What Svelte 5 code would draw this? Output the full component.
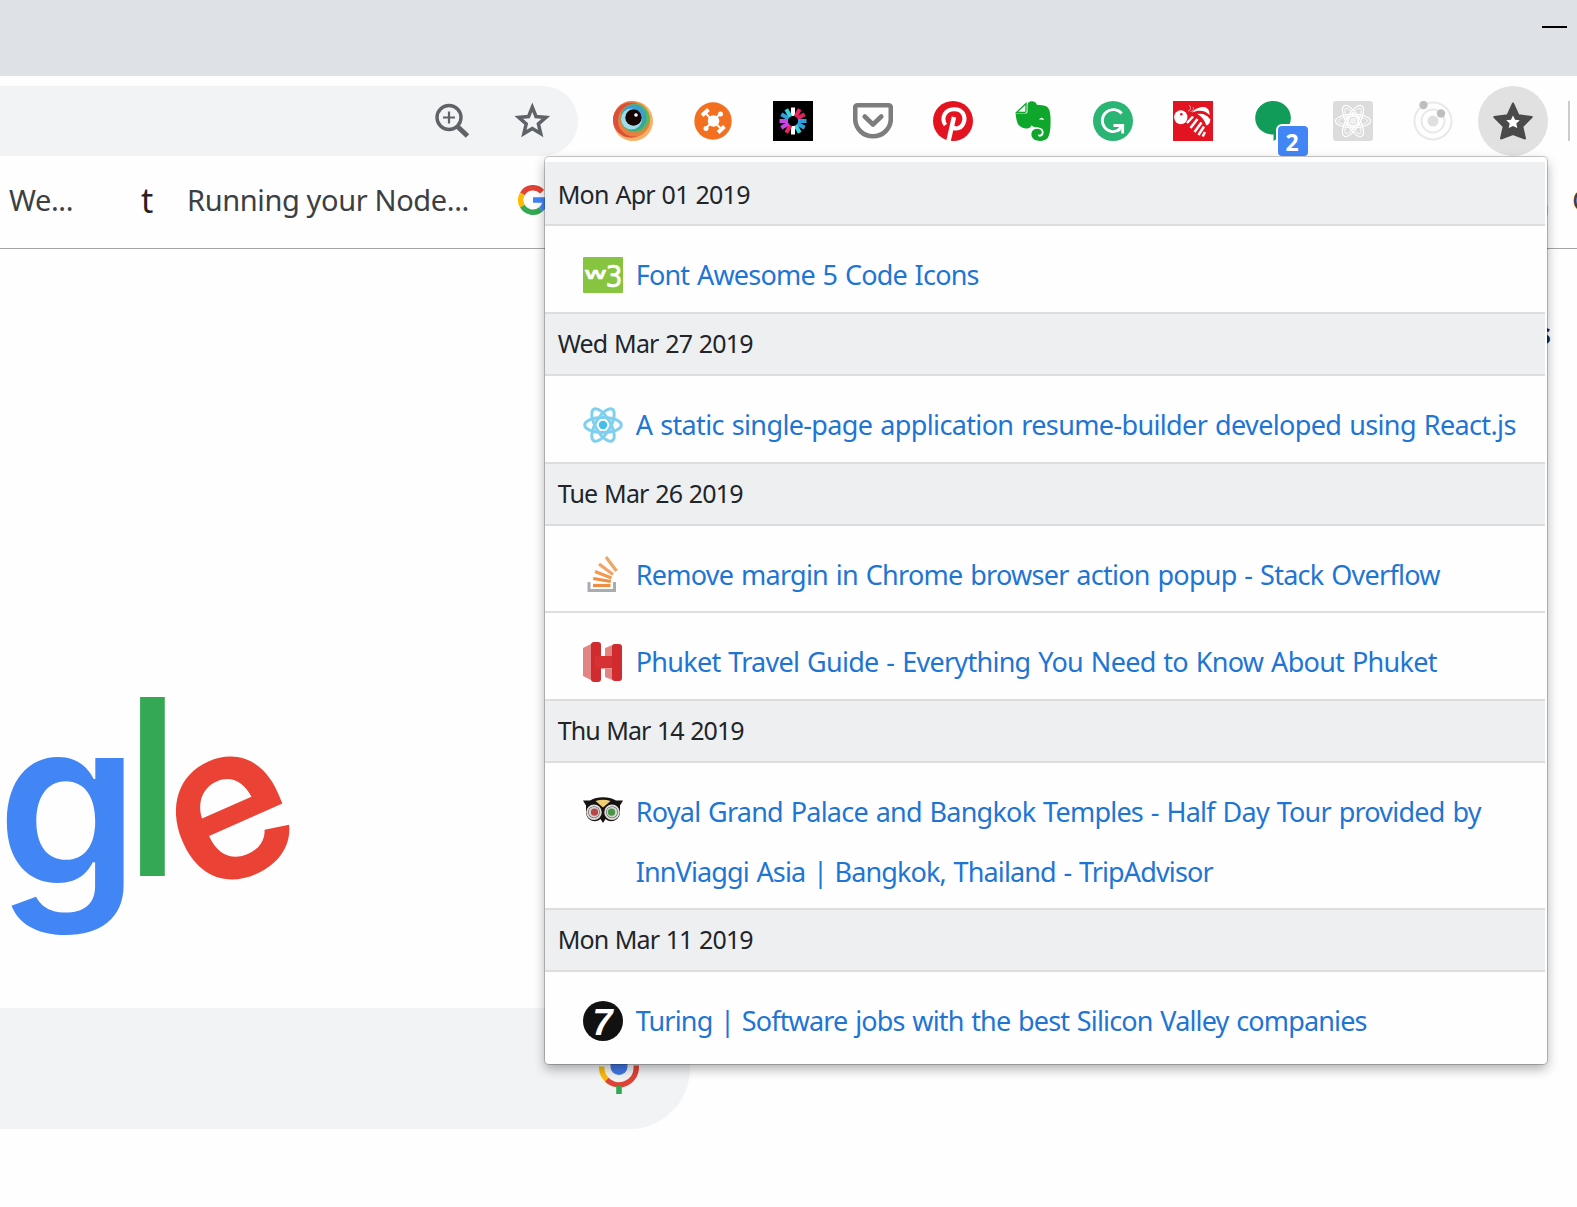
<script>
  const groups = [
    { date: 'Mon Apr 01 2019', width: 192, items: [
      { icon: 'w3', lines: [['Font Awesome 5 Code Icons', 343]] },
    ] },
    { date: 'Wed Mar 27 2019', width: 195, items: [
      { icon: 'react', lines: [['A static single-page application resume-builder developed using React.js', 880]] },
    ] },
    { date: 'Tue Mar 26 2019', width: 185, items: [
      { icon: 'stack', lines: [['Remove margin in Chrome browser action popup - Stack Overflow', 804]] },
      { icon: 'hotels', lines: [['Phuket Travel Guide - Everything You Need to Know About Phuket', 801]] },
    ] },
    { date: 'Thu Mar 14 2019', width: 186, items: [
      { icon: 'owl', lines: [
        ['Royal Grand Palace and Bangkok Temples - Half Day Tour provided by', 845],
        ['InnViaggi Asia | Bangkok, Thailand - TripAdvisor', 577],
      ] },
    ] },
    { date: 'Mon Mar 11 2019', width: 195, items: [
      { icon: 'turing', lines: [['Turing | Software jobs with the best Silicon Valley companies', 731]] },
    ] },
  ];

  const spokes = ['#fff', '#e8265f', '#d9265f', '#2f9fe0', '#2f9fe0', '#35d3dd', '#fff', '#e8265f', '#c846e6', '#c846e6', '#2f9fe0', '#35d3dd'];
  const petals = [0, 60, 120];

  // Adjusts tracking so a label spans the given width.
  function fit(node, width) {
    node.style.letterSpacing = '0px';
    const natural = node.getBoundingClientRect().width;
    node.style.letterSpacing = (width - natural) / node.textContent.length + 'px';
  }
</script>

<div class="window">
  <div class="titlebar"><span class="minimize"></span></div>

  <div class="toolbar">
    <div class="omnibox">
      <svg class="tool" viewBox="0 0 40 40">
        <circle cx="17" cy="16.500" r="12" fill="none" stroke="#5f6368" stroke-width="3.400" />
        <path d="M17 10.500v12M11 16.500h12" stroke="#5f6368" stroke-width="2.200" />
        <path d="M25.500 25.500l10 9.500" stroke="#5f6368" stroke-width="5" />
      </svg>
      <svg class="tool" viewBox="0 0 40 40">
        <path d="M20.300 6.200l3.700 9.300 9.900.9-7.500 6.500 2.300 9.700-8.400-5.100-8.400 5.100 2.300-9.700-7.500-6.500 9.900-.9z" fill="none" stroke="#5f6368" stroke-width="3.500" />
      </svg>
    </div>

    <div class="extensions">
      <svg class="ext" viewBox="0 0 40 40">
        <circle cx="20" cy="20" r="20" fill="#f6b166" />
        <circle cx="18.500" cy="18.500" r="18.400" fill="#ef8a45" />
        <circle cx="17.500" cy="19" r="17.500" fill="#dd4f3c" />
        <circle cx="21" cy="19.500" r="16" fill="#e9803f" />
        <circle cx="22" cy="17" r="14.300" fill="#5cb85a" />
        <circle cx="20.500" cy="17" r="13" fill="#3aa88f" />
        <circle cx="21" cy="14.500" r="11" fill="#3c9fd0" />
        <circle cx="18.500" cy="18" r="10.500" fill="#9fdcea" />
        <circle cx="20.500" cy="16.500" r="8.200" fill="#160706" />
        <circle cx="23" cy="14" r="1.800" fill="#fff" />
      </svg>
      <svg class="ext" viewBox="0 0 40 40">
        <circle cx="20" cy="20" r="18.700" fill="#f37021" />
        <path d="M11 10.500l9 9.500 9.500 9M12.500 27.500L20 20l7.500-7.500" stroke="#fff" stroke-width="2" fill="none" />
        <circle cx="20.500" cy="20" r="5.800" fill="#fff" />
        <circle cx="27.500" cy="13" r="2.500" fill="#fff" /><circle cx="13" cy="27.500" r="2.500" fill="#fff" />
        <path d="M9 14.500l6.500-6M25 31.500l6.500-6" stroke="#fff" stroke-width="4" />
      </svg>
      <svg class="ext" viewBox="0 0 40 40">
        <rect width="40" height="40" fill="#000" />
        {#each spokes as color, i}
          <rect x="18" y="6.500" width="4" height="8.500" fill={color} transform="rotate({i * 30} 20 20)" />
        {/each}
      </svg>
      <svg class="ext" viewBox="0 0 40 40">
        <path d="M4.500 4.200h31a2.300 2.300 0 0 1 2.300 2.300v11.500a17.800 17.300 0 0 1-35.600 0V6.500a2.300 2.300 0 0 1 2.300-2.300z" fill="none" stroke="#7d7d7d" stroke-width="4.600" />
        <path d="M11.700 15.500l8.300 8 8.300-8" fill="none" stroke="#7d7d7d" stroke-width="4.600" stroke-linecap="round" stroke-linejoin="round" />
      </svg>
      <svg class="ext" viewBox="0 0 40 40">
        <circle cx="20" cy="20" r="20" fill="#e3141f" />
        <path d="M12.500 24c-2.500-3-2.800-7.500-.7-11 3.700-6 14.300-6.500 18.200-.5 3.500 6 0 14.800-6.700 15-2.200 0-3.800-1-4.300-2.500" fill="none" stroke="#fff" stroke-width="4.200" />
        <path d="M21 16l-5.500 24" stroke="#fff" stroke-width="4.500" />
      </svg>
      <svg class="ext" viewBox="0 0 40 40">
        <path d="M14.500 4C14.500 1 17 0 19.500.3 22 .6 23.500 2 23.800 3.800 28 4 31 4.300 34 5.800 37 8 37.700 14 37.600 21 37.500 28 37 33 35 36.500 32.500 40.500 25 40.800 21 38.500 17.500 36 17.500 30.500 21 28.500 24 27 28.500 28 28.800 31 29 33 27 34.300 25.300 33.600 24.500 34.500 25.300 35.600 27 35.700 29.500 35.700 31 33.500 30.500 30.500 30 27.500 27 26.500 23 26.300 21 26.200 19.500 25.500 18.500 24.300 18 26.500 16 27.800 13 27.500 8 27 5 24.500 4 20.500 3.300 17.500 2.700 15.500 2.700 12.500L12 12.500C13.500 12.500 14.500 12 14.500 10.500z" fill="#0ea72c" />
        <path d="M3.500 11.500L13 2.500v7.500a1.500 1.500 0 0 1-1.500 1.500z" fill="#eefaef" stroke="#0ea72c" stroke-width="1.300" />
        <path d="M26.300 19c.5-3 3.700-3 4.700.2-1.500-.8-3.200-.9-4.700-.2z" fill="#fff" />
      </svg>
      <svg class="ext" viewBox="0 0 40 40">
        <circle cx="20" cy="20" r="20" fill="#2bb574" />
        <path d="M28.700 12.500a11 11 0 1 0-1.500 15.700" fill="none" stroke="#fff" stroke-width="2.800" />
        <path d="M20.500 24.500h9.200v8M29.500 24.700l-5 5" fill="none" stroke="#fff" stroke-width="2.800" />
      </svg>
      <svg class="ext" viewBox="0 0 40 40">
        <rect width="40" height="40" fill="#e31422" />
        <ellipse cx="7.800" cy="16.300" rx="6.600" ry="7" fill="#fff" /><circle cx="8.300" cy="13.200" r="1.300" fill="#e31422" />
        <path d="M19 11.500c2.500-3.500 7.500-5.800 12-5.500 4 .6 6 4 5.500 8-4-4.500-10.500-5.500-17.500-2.500z" fill="#fff" />
        <path d="M24 12.800c6-.8 11 1.200 13.300 5.200 0 4-1.500 6-4 6.500-1.500-5-4.500-9-9.300-11.700z" fill="#fff" />
        <path d="M23 12c6-1 11 1 14 5.500" fill="none" stroke="#e31422" stroke-width="1.200" />
        <path d="M14 22l6-6.500M17.500 27l7-9M21.500 31l7-9.500M25.500 34l5.500-8.500M29.700 35.500l2.300-4.500" stroke="#fff" stroke-width="2.500" fill="none" />
        <path d="M15 10c3-1 3.500-3.500 1-6M17.500 10.500c3-.5 3.500-2.500 2.500-4.500" fill="none" stroke="#f2a0a5" stroke-width="1" />
      </svg>
      <div class="ext chat">
        <svg viewBox="0 0 40 40">
          <path d="M20 0C10 0 2.200 7.500 2.200 17S10 33.500 20.500 33.500V40C29 35.500 37.900 26 37.900 17 37.900 7.500 30 0 20 0z" fill="#119d59" />
        </svg>
        <span class="badge">2</span>
      </div>
      <svg class="ext" viewBox="0 0 40 40">
        <rect width="40" height="40" rx="3" fill="#dcdcdc" />
        <g fill="none" stroke="#fff" stroke-width="1.200">
          {#each petals as a}
            <ellipse cx="20" cy="20" rx="17.500" ry="6.800" transform="rotate({a} 20 20)" />
            <ellipse cx="20" cy="20" rx="14.500" ry="4.500" transform="rotate({a} 20 20)" stroke-width=".8" />
          {/each}
          <circle cx="20" cy="20" r="5.500" />
        </g>
        <circle cx="20" cy="20" r="3.200" fill="#f1f1f1" />
      </svg>
      <svg class="ext" viewBox="0 0 40 40">
        <circle cx="20" cy="20" r="18.500" fill="none" stroke="#e9e9e9" stroke-width="2" />
        <circle cx="20" cy="20" r="11.500" fill="none" stroke="#e9e9e9" stroke-width="2" />
        <circle cx="20" cy="20" r="5.500" fill="#dfdfdf" />
        <circle cx="10.500" cy="4" r="4.200" fill="#bebebe" /><circle cx="28" cy="12.500" r="4.200" fill="#bebebe" />
      </svg>
      <div class="ext active">
        <svg viewBox="0 0 40 40">
          <path d="M20 2.500l5.400 11.700L38.700 16 29.300 25.500 32 37.500 20 33 8 37.500l2.700-12L1.300 16l13.300-1.800z" fill="#4a4a4a" stroke="#4a4a4a" stroke-width="2" stroke-linejoin="round" />
          <path d="M20 14.500l2 4.200 4.800.5-3.500 3.300 1 4.500-4.300-2-4.300 2 1-4.500-3.500-3.300 4.800-.5z" fill="#fff" />
        </svg>
      </div>
    </div>
    <span class="divider"></span>
  </div>

  <div class="bookmarks">
    <span class="mark we"><span use:fit={64}>We...</span></span>
    <span class="tee">t</span>
    <span class="mark node"><span use:fit={282}>Running your Node...</span></span>
    <svg class="g" viewBox="0 0 30 30" fill="none" stroke-width="5.400">
      <path d="M24.100 6.700A12.300 12.300 0 0 0 4.400 8.800" stroke="#df4335" />
      <path d="M4.400 8.800a12.300 12.300 0 0 0 0 12.400" stroke="#fbbc05" />
      <path d="M4.400 21.200a12.300 12.300 0 0 0 18.500 3.200" stroke="#34a853" />
      <path d="M22.900 24.400A12.300 12.300 0 0 0 27.300 15H15" stroke="#4285f4" />
    </svg>
    <span class="folder"></span>
    <span class="mark last">C</span>
  </div>

  <div class="page">
    <div class="links">s</div>
    <svg class="wordmark" viewBox="0 0 320 290">
      <text class="blue" transform="translate(-3 215) scale(1.050 1.075)">g</text>
      <text class="green" transform="translate(127 206) scale(.9 1.140)">l</text>
      <text class="red" transform="translate(168 207.500) scale(.97 1.010) rotate(-23 64 -60)">e</text>
    </svg>
    <div class="search">
      <svg class="mic" viewBox="0 0 44 64">
        <rect x="13.500" y="6" width="17" height="39" rx="8.500" fill="#4079e6" />
        <path d="M4.700 36.500a17.300 17.300 0 0 0 5.100 13.200" fill="none" stroke="#fbbc05" stroke-width="5.400" />
        <path d="M9.800 49.700a17.300 17.300 0 0 0 29.500-12.200v-2" fill="none" stroke="#df4335" stroke-width="5.400" />
        <path d="M22 56v8" stroke="#34a853" stroke-width="5.600" />
      </svg>
    </div>
  </div>

  <div class="popup">
    {#each groups as group}
      <div class="date"><span use:fit={group.width}>{group.date}</span></div>
      {#each group.items as item}
        <div class="item" class:tall={item.lines.length > 1}>
          <svg class="favicon" viewBox="0 0 40 40">
            {#if item.icon === 'w3'}
              <rect y="2" width="40" height="36" rx="1" fill="#87c540" />
              <text class="w" x="1" y="23.500" textLength="23" lengthAdjust="spacingAndGlyphs">w</text>
              <text class="three" x="22.500" y="32" textLength="17" lengthAdjust="spacingAndGlyphs">3</text>
            {:else if item.icon === 'react'}
              {#each petals as a}
                <ellipse cx="20" cy="20" rx="18.300" ry="7.500" fill="none" stroke="#7fd0ee" stroke-width="3" transform="rotate({a} 20 20)" />
              {/each}
              <circle cx="20" cy="20" r="4.200" fill="#45bde9" />
            {:else if item.icon === 'stack'}
              <path d="M6 27v8.500h25.500V27" fill="none" stroke="#a9adb1" stroke-width="3" />
              <g stroke="#ee8e42" stroke-width="3.200">
                <path d="M10 30.500h17.500" /><path d="M10.300 23.500l17.400 3" /><path d="M12 16.500l16.500 6.500" stroke="#f09a52" /><path d="M16 9l14 10.500" stroke="#f0a364" /><path d="M23 2l10.500 14" stroke="#eba766" />
              </g>
            {:else if item.icon === 'hotels'}
              <path d="M0 6l12-6v40L0 34z" fill="#e28484" />
              <rect x="8" width="10" height="40" rx="3" fill="#d02c2f" />
              <path d="M22 6l10-4v12H22zM22 27h10v12l-10-4z" fill="#e28484" />
              <rect x="12" y="14" width="24" height="12.500" fill="#d63235" />
              <rect x="29" y="2" width="10" height="37" rx="3" fill="#d02c2f" />
            {:else if item.icon === 'owl'}
              <path d="M0 8.500h7C11 6 15 5.300 20 5.300S29 6 33 8.500h7l-3 5v8c-1.500 7.500-9.500 10-14.500 5.500L20 31l-2.500-4C12.500 31.500 4.500 29 3 21.500v-8z" fill="#151311" />
              <path d="M12.500 9q7.500-2.500 15 0L20 15.500z" fill="#efcf72" />
              <circle cx="11" cy="20.200" r="6.800" fill="#171513" stroke="#dcdad8" stroke-width="2" />
              <circle cx="29" cy="20.200" r="6.800" fill="#171513" stroke="#dcdad8" stroke-width="2" />
              <circle cx="11" cy="20.200" r="5.500" fill="#d9d0ce" /><circle cx="29" cy="20.200" r="5.500" fill="#d0d8cd" />
              <circle cx="11.500" cy="20.200" r="3.600" fill="#b5484b" /><circle cx="28.500" cy="20.200" r="3.600" fill="#479442" />
            {:else}
              <circle cx="20" cy="20" r="20" fill="#111" />
              <text class="seven" x="9.500" y="33.500">7</text>
            {/if}
          </svg>
          <a href="#top">
            {#each item.lines as [text, width]}
              <span class="line"><span use:fit={width}>{text}</span></span>
            {/each}
          </a>
        </div>
      {/each}
    {/each}
  </div>
</div>

<style>
  :global(body) { margin: 0; background: #fff; }
  .window {
    position: relative;
    width: 1577px;
    height: 1207px;
    overflow: hidden;
    background: #fefefe;
    font-family: 'Noto Sans', 'Open Sans', sans-serif;
  }
  svg { display: block; flex: none; }
  .titlebar {
    display: flex;
    justify-content: flex-end;
    height: 76px;
    padding: 26px 10px 0 0;
    box-sizing: border-box;
    background: #dee1e6;
  }
  .minimize { width: 25px; height: 2px; background: #000; }

  .toolbar { display: flex; align-items: flex-start; padding-top: 10px; height: 80px; box-sizing: border-box; }
  .omnibox {
    display: flex;
    justify-content: flex-end;
    align-items: center;
    gap: 40px;
    width: 578px;
    height: 70px;
    padding-right: 26px;
    box-sizing: border-box;
    border-radius: 0 35px 35px 0;
    background: #f1f3f4;
  }
  .tool { width: 40px; height: 40px; }
  .extensions { display: flex; align-items: center; gap: 40px; height: 70px; margin-left: 35px; }
  .ext { width: 40px; height: 40px; flex: none; }
  .chat { position: relative; }
  .badge {
    position: absolute;
    left: 25px;
    top: 25px;
    width: 30px;
    height: 30px;
    border-radius: 4px;
    background: #4285f4;
    box-shadow: 0 0 0 2px #fff;
    color: #fff;
    font-weight: 700;
    font-size: 23px;
    line-height: 33px;
    text-align: center;
    text-indent: -2px;
  }
  .active { width: 70px; height: 70px; margin: 0 0 0 -15px; border-radius: 50%; background: #e1e1e1; display: flex; align-items: center; justify-content: center; }
  .active svg { width: 40px; height: 40px; }
  .divider { width: 2px; height: 40px; margin: 15px 0 0 20px; background: #ccc; }

  .bookmarks { display: flex; align-items: center; height: 93px; box-sizing: border-box; padding-bottom: 4px; border-bottom: 1px solid #a5a5a5; color: #3c4043; }
  .bookmarks > * { flex: none; }
  .mark { box-sizing: border-box; font-size: 29px; line-height: 40px; white-space: nowrap; }
  .we { width: 141px; padding-left: 9px; }
  .tee { width: 46px; font: 34px/40px 'Noto Sans', sans-serif; color: #29211f; }
  .node { width: 331px; }
  .g { width: 30px; height: 30px; }
  .folder { width: 20px; height: 11px; margin: 21px 24px 0 980px; border-radius: 2px; background: #f5d96b; }

  .page { display: flex; flex-direction: column; align-items: flex-start; }
  .links { align-self: flex-end; height: 421px; padding: 66px 26px 0 0; box-sizing: border-box; font: 700 28px/36px 'Noto Sans', sans-serif; color: #1c2b45; }
  .wordmark { width: 320px; height: 290px; overflow: visible; font-family: Inter, sans-serif; font-weight: 600; font-size: 216px; }
  .blue { fill: #4285f4; }
  .green { fill: #34a853; }
  .red { fill: #ea4335; }
  .search { display: flex; justify-content: flex-end; width: 690px; height: 121px; margin-top: 48px; padding: 22px 49px 0 0; box-sizing: border-box; border-radius: 0 61px 61px 0; background: #f1f3f4; }
  .mic { width: 44px; height: 64px; }

  .popup {
    position: absolute;
    left: 545px;
    top: 157px;
    width: 1002px;
    height: 907px;
    padding: 5px 2px 0 0;
    box-sizing: border-box;
    border-radius: 4px;
    background: #fefefe;
    box-shadow: 0 0 0 1px rgba(0, 0, 0, .2), 0 5px 12px rgba(0, 0, 0, .32);
    overflow: hidden;
  }
  .date, .item { box-sizing: border-box; border-top: 2px solid #dcdddf; }
  .date { height: 62.150px; padding-left: 12.700px; background: #edeff1; color: #212529; font-size: 25px; line-height: 58px; }
  .date:first-child { border-top-color: #edeff1; line-height: 60px; }
  .item { display: flex; height: 87.700px; padding: 19px 0 0 38px; }
  .tall { height: 146.500px; }
  .favicon { width: 40px; height: 40px; margin: 10px 12.700px 0 0; }
  a { color: #1f75d4; text-decoration: none; font-size: 27px; line-height: 60px; word-spacing: 1.500px; }
  .line { display: block; white-space: nowrap; }
  .date span, .mark span, .line span { display: inline-block; white-space: nowrap; }
  .date span { word-spacing: 1px; }
  .w, .three { fill: #fff; stroke: #fff; stroke-width: .6px; font-size: 15px; font-family: 'DejaVu Sans', sans-serif; }
  .three { font-size: 30px; }
  .seven { fill: #fff; font: italic 700 36px 'Liberation Sans', sans-serif; }
</style>
